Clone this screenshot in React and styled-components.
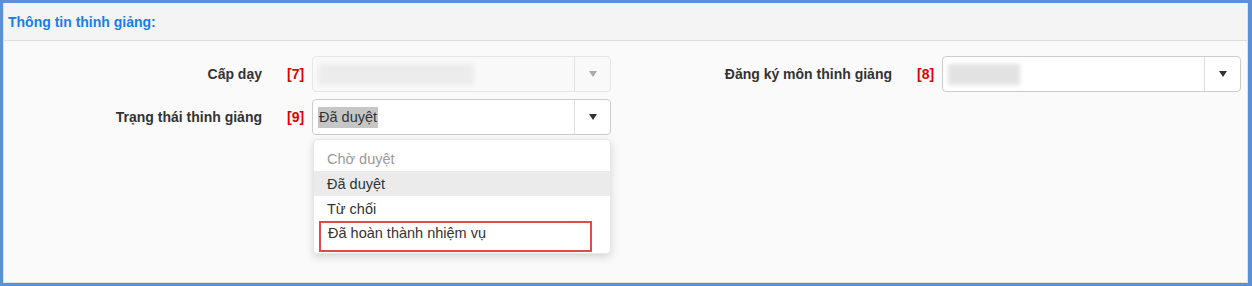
import styled, { createGlobalStyle } from "styled-components";

const GlobalStyle = createGlobalStyle`
  html, body {
    margin: 0;
    padding: 0;
    background: #fafafa;
  }
  body {
    font-family: "Liberation Sans", Arial, sans-serif;
  }
`;

const options = [
  { label: "Chờ duyệt", muted: true },
  { label: "Đã duyệt", active: true },
  { label: "Từ chối" },
  { label: "Đã hoàn thành nhiệm vụ", marked: true },
];

function App() {
  return (
    <>
      <GlobalStyle />
      <Frame>
        <Panel>
          <Header>Thông tin thỉnh giảng:</Header>
          <Body>
            <Form>
              <Field>
                <Label>Cấp dạy</Label>
                <Marker>[7]</Marker>
                <Select $disabled>
                  <Value>
                    <Blur $width={156} />
                  </Value>
                  <Toggle>
                    <Arrow $disabled />
                  </Toggle>
                </Select>
              </Field>
              <Field>
                <Label>Đăng ký môn thỉnh giảng</Label>
                <Marker>[8]</Marker>
                <Select>
                  <Value>
                    <Blur $width={72} $dark />
                  </Value>
                  <Toggle>
                    <Arrow />
                  </Toggle>
                </Select>
              </Field>
              <Field>
                <Label>Trạng thái thỉnh giảng</Label>
                <Marker>[9]</Marker>
                <SelectWrap>
                  <Select>
                    <Value>
                      <Selected>Đã duyệt</Selected>
                    </Value>
                    <Toggle>
                      <Arrow />
                    </Toggle>
                  </Select>
                  <Menu>
                    {options.map((o) => (
                      <Option
                        key={o.label}
                        $muted={o.muted}
                        $active={o.active}
                        $marked={o.marked}
                      >
                        {o.label}
                      </Option>
                    ))}
                  </Menu>
                </SelectWrap>
              </Field>
            </Form>
          </Body>
        </Panel>
      </Frame>
    </>
  );
}

export default App;

const Frame = styled.div`
  box-sizing: border-box;
  width: 1252px;
  height: 286px;
  border: 3px solid #5b8fd6;
  border-right-width: 4px;
  background: #fafafa;
`;

const Panel = styled.div`
  box-sizing: border-box;
  height: 100%;
  border: 1px solid #e2e2e2;
  border-top: none;
  display: flex;
  flex-direction: column;
`;

const Header = styled.div`
  height: 37px;
  padding: 0 0 0 4px;
  display: flex;
  align-items: center;
  background: #f4f4f4;
  border-bottom: 1px solid #dedede;
  color: #1a7ee8;
  font-weight: bold;
  font-size: 14px;
`;

const Body = styled.div`
  flex: 1;
  padding-top: 15px;
  background: #fafafa;
`;

const Form = styled.div`
  display: grid;
  grid-template-columns: 607px 607px;
  column-gap: 23px;
  row-gap: 7px;
`;

const Field = styled.div`
  display: grid;
  grid-template-columns: 258px 50px 299px;
  align-items: center;
  height: 36px;
`;

const Label = styled.div`
  text-align: right;
  font-weight: bold;
  font-size: 14px;
  color: #333;
`;

const Marker = styled.div`
  padding-left: 25px;
  font-weight: bold;
  font-size: 14px;
  color: #e00000;
`;

const SelectWrap = styled.div`
  position: relative;
`;

const Select = styled.div`
  box-sizing: border-box;
  height: 36px;
  display: flex;
  align-items: stretch;
  border: 1px solid ${(p) => (p.$disabled ? "#e6e6e6" : "#cccccc")};
  border-radius: 4px;
  background: ${(p) => (p.$disabled ? "#f9f9f9" : "#ffffff")};
`;

const Value = styled.div`
  flex: 1;
  display: flex;
  align-items: center;
  padding-left: 5px;
  font-size: 14.5px;
  color: #333;
  overflow: hidden;
`;

const Blur = styled.span`
  display: block;
  width: ${(p) => p.$width}px;
  height: 21px;
  background: ${(p) => (p.$dark ? "#e2e2e2" : "#ececec")};
  filter: blur(2px);
`;

const Selected = styled.span`
  background: #c6c6c6;
  padding: 3px 1px;
  line-height: 15px;
`;

const Toggle = styled.div`
  width: 35px;
  border-left: 1px solid #e0e0e0;
  display: flex;
  align-items: center;
  justify-content: center;
`;

const Arrow = styled.span`
  width: 0;
  height: 0;
  border-left: 4px solid transparent;
  border-right: 4px solid transparent;
  border-top: 6px solid ${(p) => (p.$disabled ? "#aaaaaa" : "#333333")};
`;

const Menu = styled.div`
  position: absolute;
  top: 40px;
  left: 1px;
  width: 298px;
  box-sizing: border-box;
  padding: 6px 0 1px;
  background: #fff;
  border: 1px solid #e6e6e6;
  border-radius: 4px;
  box-shadow: 0 3px 8px rgba(0, 0, 0, 0.15);
`;

const Option = styled.div`
  box-sizing: border-box;
  height: ${(p) => (p.$marked ? "31px" : "25px")};
  display: flex;
  align-items: center;
  padding-left: ${(p) => (p.$marked ? "7px" : "13px")};
  margin: ${(p) => (p.$marked ? "0 18px 0 5px" : "0")};
  border: ${(p) => (p.$marked ? "2px solid #e5484b" : "none")};
  padding-bottom: ${(p) => (p.$marked ? "7px" : "0")};
  background: ${(p) => (p.$active ? "#ebebeb" : "transparent")};
  font-size: 14.5px;
  color: ${(p) => (p.$muted ? "#9a9a9a" : "#333")};
`;
